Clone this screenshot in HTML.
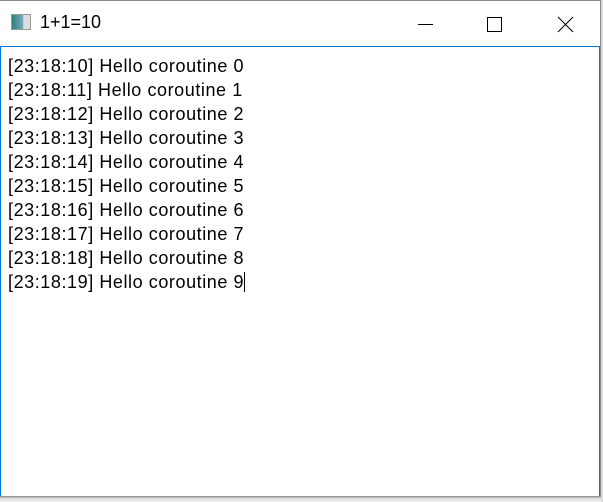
<!DOCTYPE html>
<html><head><meta charset="utf-8"><style>
html,body{margin:0;padding:0;width:603px;height:502px;overflow:hidden;background:#fff;}
.win{position:absolute;left:0;top:0;width:601px;height:496px;border-top:1px solid #8a8a8a;border-right:1px solid #8a8a8a;background:#fff;box-sizing:border-box;}
.title{position:absolute;left:40px;top:11px;font:18px "Liberation Sans",sans-serif;color:#000;}
.icon{position:absolute;left:11px;top:13px;width:20px;height:16px;border:1px solid #999;box-sizing:border-box;background:linear-gradient(90deg,#2e7f7a,#7ab 60%,#ddd 65%,#ddd);}
.content{position:absolute;left:0;top:45px;width:600px;height:451px;border:1px solid #0078d7;box-sizing:border-box;background:#fff;}
.txt{position:absolute;left:7px;top:7px;font:18px/24px "Liberation Sans",sans-serif;letter-spacing:0.57px;color:#000;white-space:pre;}
.shadow{position:absolute;left:0;top:496px;width:603px;height:6px;background:linear-gradient(#888,#ddd 40%,#f4f4f4);}
.rs{position:absolute;left:601px;top:0;width:2px;height:502px;background:#ddd;}
</style></head><body>
<div class="win">
<div class="icon"></div>
<div class="title">1+1=10</div>
<svg style="position:absolute;left:0;top:0" width="603" height="45">
<line x1="418" y1="23.5" x2="433" y2="23.5" stroke="#000" stroke-width="1"/>
<rect x="487.5" y="16.5" width="14" height="14" fill="none" stroke="#000" stroke-width="1"/>
<path d="M558 16 L573 31 M573 16 L558 31" stroke="#000" stroke-width="1"/>
</svg>
<div class="content"><div class="txt">[23:18:10] Hello coroutine 0
[23:18:11] Hello coroutine 1
[23:18:12] Hello coroutine 2
[23:18:13] Hello coroutine 3
[23:18:14] Hello coroutine 4
[23:18:15] Hello coroutine 5
[23:18:16] Hello coroutine 6
[23:18:17] Hello coroutine 7
[23:18:18] Hello coroutine 8
[23:18:19] Hello coroutine 9<span style="display:inline-block;width:1px;height:20px;background:#000;vertical-align:-4px;margin-left:-0.5px"></span></div></div>
</div>
<div class="shadow"></div>
<div class="rs"></div>
</body></html>
